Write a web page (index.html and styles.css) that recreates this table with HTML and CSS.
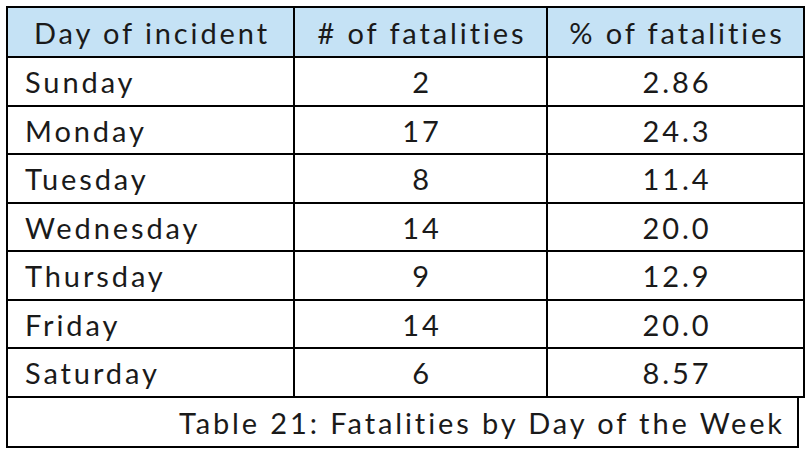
FILE: index.html
```html
<!DOCTYPE html>
<html>
<head>
<meta charset="utf-8">
<link rel="stylesheet" href="styles.css">
</head>
<body>
<div class="wrap">
  <table class="data">
    <colgroup>
      <col class="c1"><col class="c2"><col class="c3">
    </colgroup>
    <thead>
      <tr><th>Day of incident</th><th># of fatalities</th><th>% of fatalities</th></tr>
    </thead>
    <tbody>
      <tr><td class="day">Sunday</td><td>2</td><td>2.86</td></tr>
      <tr><td class="day">Monday</td><td>17</td><td>24.3</td></tr>
      <tr><td class="day">Tuesday</td><td>8</td><td>11.4</td></tr>
      <tr><td class="day">Wednesday</td><td>14</td><td>20.0</td></tr>
      <tr><td class="day">Thursday</td><td>9</td><td>12.9</td></tr>
      <tr><td class="day">Friday</td><td>14</td><td>20.0</td></tr>
      <tr><td class="day">Saturday</td><td>6</td><td>8.57</td></tr>
    </tbody>
  </table>
  <div class="caption">Table 21: Fatalities by Day of the Week</div>
</div>
</body>
</html>
```
FILE: styles.css
```css
html, body {
  margin: 0;
  padding: 0;
  background: #ffffff;
}
.wrap {
  padding: 6px 0 0 6px;
  font-family: Lato, "Open Sans", sans-serif;
  font-weight: 400;
  color: #1a1a1a;
  font-size: 29px;
  letter-spacing: 2.9px;
}
.data {
  border-collapse: collapse;
  width: 797px;
  table-layout: fixed;
}
.c1 { width: 287px; }
.c2 { width: 253px; }
.c3 { width: 257px; }
.data th, .data td {
  border: 2px solid #000;
  padding: 2px 0 0 3px;
  text-align: center;
  font-weight: 400;
  line-height: 44px;
}
.data th {
  background: #c5e2f5;
  height: 46px;
}
.data td {
  height: 44.5px;
}
.data td.day {
  text-align: left;
  padding-left: 17px;
}
.caption {
  box-sizing: border-box;
  width: 793px;
  height: 50px;
  border: 2px solid #000;
  border-top: none;
  text-align: right;
  padding: 2px 12px 0 0;
  line-height: 46px;
}
```
